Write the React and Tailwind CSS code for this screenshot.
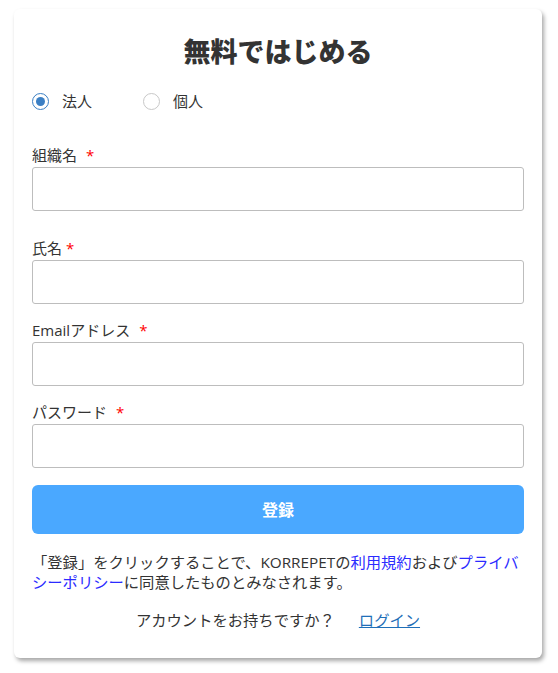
import { useState } from 'react'

const font = { fontFamily: '"Open Sans", "Noto Sans CJK JP", sans-serif' }

function Radio({ checked, label, onClick }) {
  return (
    <button type="button" onClick={onClick} className="flex items-center gap-[13px]">
      <span
        className={
          checked
            ? 'flex h-[17px] w-[17px] items-center justify-center rounded-full border border-[#3b7fc4] bg-white'
            : 'flex h-[17px] w-[17px] items-center justify-center rounded-full border border-[#c8c8c8] bg-white'
        }
      >
        {checked ? <span className="h-[9px] w-[9px] rounded-full bg-[#3b7fc4]" /> : null}
      </span>
      <span className="text-[15px] leading-5 text-[#333]">{label}</span>
    </button>
  )
}

function Field({ label, type = 'text', gap = true, className = '' }) {
  return (
    <div className={className}>
      <label className="flex h-5 items-center text-[15px] leading-5 text-[#333]">
        {label}
        {gap ? <span className="ml-[9px] text-[#ff0000]">*</span> : <span className="ml-[4px] text-[#ff0000]">*</span>}
      </label>
      <input
        type={type}
        className="mt-[2px] block h-[44px] w-full rounded-[3px] border border-[#bdbdbd] px-3 text-[15px] outline-none"
      />
    </div>
  )
}

export default function App() {
  const [kind, setKind] = useState('corp')

  return (
    <div className="min-h-screen bg-white pt-[9px]" style={font}>
      <div className="ml-[14px] w-[528px] rounded-[6px] bg-white px-[18px] pb-[28px] pt-[24px] shadow-[2px_3px_4px_rgba(0,0,0,0.35)]">
        <h1 className="h-[38px] text-center text-[27px] font-extrabold leading-[38px] text-[#333]">
          無料ではじめる
        </h1>
        <div className="mt-[20px] flex h-5 items-center gap-[51px]">
          <Radio checked={kind === 'corp'} label="法人" onClick={() => setKind('corp')} />
          <Radio checked={kind === 'person'} label="個人" onClick={() => setKind('person')} />
        </div>

        <Field label="組織名" className="mt-[34px]" />
        <Field label="氏名" gap={false} className="mt-[27px]" />
        <Field label="Emailアドレス" className="mt-[16px]" />
        <Field label="パスワード" className="mt-[16px]" />

        <button
          type="button"
          className="mt-[17px] block h-[49px] w-full rounded-[6px] bg-[#4aa8ff] text-[16px] font-bold text-white"
        >
          登録
        </button>

        <p className="mt-[18px] text-[15.3px] leading-5 text-[#333]">
          「登録」をクリックすることで、KORREPETの
          <a href="#" className="text-[#2b2bff]">利用規約</a>
          および
          <a href="#" className="text-[#2b2bff]">プライバシーポリシー</a>
          に同意したものとみなされます。
        </p>

        <p className="mt-[18px] text-center text-[15.3px] leading-5 text-[#333]">
          アカウントをお持ちですか？
          <a href="#" className="ml-[24px] text-[#1f6fb8] underline">ログイン</a>
        </p>
      </div>
    </div>
  )
}
